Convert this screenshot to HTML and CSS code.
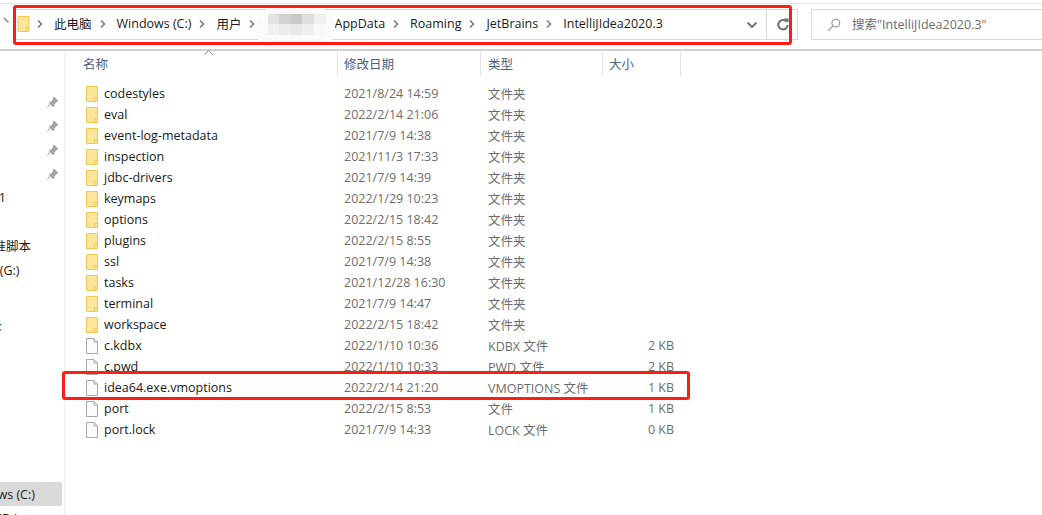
FILE: index.html
```html
<!DOCTYPE html>
<html lang="zh-CN">
<head>
  <meta charset="UTF-8" />
  <title>IntelliJIdea2020.3</title>
  <link rel="stylesheet" href="styles.css">
</head>
<body>
<svg class="defs" width="0" height="0">
  <symbol id="folder" viewBox="0 0 12 16">
    <path d="M.5.5h11v15H.5z" fill="#fde59c" stroke="#f0c750"/>
    <path d="M8.5 15.5v-4h3" fill="none" stroke="#f0c750"/>
  </symbol>
  <symbol id="file" viewBox="0 0 12 16">
    <path d="M.5.5h7.5l3.500 3.500v11.500H.5z" fill="#fbfbfb" stroke="#a8a8a8"/>
    <path d="M8 .5v3.500h3.500" fill="none" stroke="#a8a8a8"/>
  </symbol>
  <symbol id="pin" viewBox="0 0 12 12">
    <path d="M7 .5l4.500 4.500-1.500.8-2.500 2.500-.3 2-1.200.6-4-4 .6-1.200 2-.3L6.200 2z" fill="#a3a3a3"/>
    <path d="M3 8L.5 11.500" stroke="#a3a3a3" fill="none"/>
  </symbol>
  <symbol id="chev" viewBox="0 0 6 10">
    <path d="M1 1.500L4.500 5 1 8.500" fill="none" stroke="#7a7a7a" stroke-width="1.600"/>
  </symbol>
</svg>

<header class="toolbar">
  <svg class="up-arrow" width="6" height="10" viewBox="0 0 6 10"><path d="M0 1l4.500 4.500" stroke="#8a8a8a" stroke-width="1.500" fill="none"/></svg>
  <div class="addr">
    <svg class="addr-folder" width="13" height="16"><use href="#folder"/></svg>
    <svg class="chev first" width="6" height="10"><use href="#chev"/></svg>
    <span>此电脑</span>
    <svg class="chev" width="6" height="10"><use href="#chev"/></svg>
    <span>Windows (C:)</span>
    <svg class="chev" width="6" height="10"><use href="#chev"/></svg>
    <span>用户</span>
    <svg class="chev" width="6" height="10"><use href="#chev"/></svg>
    <span class="hidden-name"></span>
    <span>AppData</span>
    <svg class="chev" width="6" height="10"><use href="#chev"/></svg>
    <span>Roaming</span>
    <svg class="chev" width="6" height="10"><use href="#chev"/></svg>
    <span>JetBrains</span>
    <svg class="chev" width="6" height="10"><use href="#chev"/></svg>
    <span>IntelliJIdea2020.3</span>
    <div class="addr-refresh">
      <svg class="addr-down" width="12" height="8" viewBox="0 0 12 8"><path d="M1.500 1.500L6 6l4.500-4.500" fill="none" stroke="#777" stroke-width="2"/></svg>
      <div class="refresh-btn">
        <svg width="12" height="13" viewBox="0 0 12 13"><path d="M9.500 3.500A4.700 4.700 0 1 0 10.700 7" fill="none" stroke="#6f6f6f" stroke-width="2"/><path d="M6.500 .5h5v4.500z" fill="#6f6f6f"/></svg>
      </div>
    </div>
  </div>
  <div class="search">
    <svg width="14" height="14" viewBox="0 0 14 14"><circle cx="8.800" cy="5" r="4" fill="none" stroke="#8a8a8a"/><path d="M5.800 8L1 13" stroke="#b59a9a" stroke-width="1.200"/></svg>
    <span>搜索"IntelliJIdea2020.3"</span>
  </div>
</header>

<div class="main">
  <aside class="side">
    <div class="side-row pinned"><svg width="12" height="12"><use href="#pin"/></svg></div>
    <div class="side-row pinned"><svg width="12" height="12"><use href="#pin"/></svg></div>
    <div class="side-row pinned"><svg width="12" height="12"><use href="#pin"/></svg></div>
    <div class="side-row pinned"><svg width="12" height="12"><use href="#pin"/></svg></div>
    <div class="side-row"><span class="cut cut-one">Project1</span></div>
    <div class="side-row"></div>
    <div class="side-row"><span class="cut cut-script">油猴标准脚本</span></div>
    <div class="side-row"><span class="cut cut-drive">新加卷 (G:)</span></div>
    <div class="side-row gap"><span class="cut cut-last">下载目录</span></div>
    <div class="side-row selected"><span class="cut cut-win">Windows (C:)</span></div>
    <div class="side-row"><span class="cut cut-d">本地磁盘 (D:)</span></div>
  </aside>

  <section class="list">
    <div class="row head">
      <span class="name-head">名称</span>
      <span>修改日期</span>
      <span>类型</span>
      <span>大小</span>
      <svg class="sort" width="9" height="5" viewBox="0 0 9 5"><path d="M.5 4.500l4-4 4 4" fill="none" stroke="#8a8a8a"/></svg>
    </div>
    <div class="rows">
      <div class="row"><span class="name"><svg width="12" height="16"><use href="#folder"/></svg>codestyles</span><span>2021/8/24 14:59</span><span>文件夹</span><span></span></div>
      <div class="row"><span class="name"><svg width="12" height="16"><use href="#folder"/></svg>eval</span><span>2022/2/14 21:06</span><span>文件夹</span><span></span></div>
      <div class="row"><span class="name"><svg width="12" height="16"><use href="#folder"/></svg>event-log-metadata</span><span>2021/7/9 14:38</span><span>文件夹</span><span></span></div>
      <div class="row"><span class="name"><svg width="12" height="16"><use href="#folder"/></svg>inspection</span><span>2021/11/3 17:33</span><span>文件夹</span><span></span></div>
      <div class="row"><span class="name"><svg width="12" height="16"><use href="#folder"/></svg>jdbc-drivers</span><span>2021/7/9 14:39</span><span>文件夹</span><span></span></div>
      <div class="row"><span class="name"><svg width="12" height="16"><use href="#folder"/></svg>keymaps</span><span>2022/1/29 10:23</span><span>文件夹</span><span></span></div>
      <div class="row"><span class="name"><svg width="12" height="16"><use href="#folder"/></svg>options</span><span>2022/2/15 18:42</span><span>文件夹</span><span></span></div>
      <div class="row"><span class="name"><svg width="12" height="16"><use href="#folder"/></svg>plugins</span><span>2022/2/15 8:55</span><span>文件夹</span><span></span></div>
      <div class="row"><span class="name"><svg width="12" height="16"><use href="#folder"/></svg>ssl</span><span>2021/7/9 14:38</span><span>文件夹</span><span></span></div>
      <div class="row"><span class="name"><svg width="12" height="16"><use href="#folder"/></svg>tasks</span><span>2021/12/28 16:30</span><span>文件夹</span><span></span></div>
      <div class="row"><span class="name"><svg width="12" height="16"><use href="#folder"/></svg>terminal</span><span>2021/7/9 14:47</span><span>文件夹</span><span></span></div>
      <div class="row"><span class="name"><svg width="12" height="16"><use href="#folder"/></svg>workspace</span><span>2022/2/15 18:42</span><span>文件夹</span><span></span></div>
      <div class="row"><span class="name"><svg width="12" height="16"><use href="#file"/></svg>c.kdbx</span><span>2022/1/10 10:36</span><span>KDBX 文件</span><span class="size">2 KB</span></div>
      <div class="row"><span class="name"><svg width="12" height="16"><use href="#file"/></svg>c.pwd</span><span>2022/1/10 10:33</span><span>PWD 文件</span><span class="size">2 KB</span></div>
      <div class="row"><span class="name"><svg width="12" height="16"><use href="#file"/></svg>idea64.exe.vmoptions</span><span>2022/2/14 21:20</span><span>VMOPTIONS 文件</span><span class="size">1 KB</span></div>
      <div class="row"><span class="name"><svg width="12" height="16"><use href="#file"/></svg>port</span><span>2022/2/15 8:53</span><span>文件</span><span class="size">1 KB</span></div>
      <div class="row"><span class="name"><svg width="12" height="16"><use href="#file"/></svg>port.lock</span><span>2021/7/9 14:33</span><span>LOCK 文件</span><span class="size">0 KB</span></div>
    </div>
  </section>
</div>

<!-- 打码和红框都是盖在截图上的 -->
<svg class="mosaic" width="80" height="40" viewBox="0 0 80 40">
  <rect width="80" height="40" rx="18" fill="#fafafa"/>
  <rect x="13" y="6" width="11" height="10" fill="#e2e2e2"/>
  <rect x="24" y="6" width="12" height="10" fill="#d2d2d2"/>
  <rect x="36" y="6" width="11" height="10" fill="#c9c9c9"/>
  <rect x="47" y="6" width="12" height="10" fill="#dedede"/>
  <rect x="59" y="6" width="12" height="10" fill="#efefef"/>
  <rect x="13" y="16" width="11" height="11" fill="#f0f0f0"/>
  <rect x="24" y="16" width="12" height="11" fill="#ececec"/>
  <rect x="36" y="16" width="11" height="11" fill="#e8e8e8"/>
  <rect x="47" y="16" width="12" height="11" fill="#efefef"/>
  <rect x="59" y="16" width="12" height="11" fill="#f8f8f8"/>
</svg>
<div class="mark mark-addr"></div>
<div class="mark mark-row"></div>
</body>
</html>
```

FILE: styles.css
```css
* {
  box-sizing: border-box;
}

html, body {
  margin: 0;
  height: 100%;
}

body {
  position: relative;
  width: 1042px;
  height: 515px;
  overflow: hidden;
  background: #fff;
  color: #1a1a1a;
  font-family: "Open Sans", "Noto Sans CJK SC", sans-serif;
  font-size: 12.5px;
}

.defs {
  position: absolute;
}

.toolbar {
  display: flex;
  height: 51px;
  padding-top: 8px;
  border-top: 1px solid transparent;
  border-bottom: 2px solid #cfcfcf;
  background: linear-gradient(#fff 2px, #e6e6e6 2px, #e6e6e6 3px, #fff 3px);
}

.up-arrow {
  flex: none;
  width: 14px;
  margin-top: 8px;
}

.addr {
  display: flex;
  align-items: center;
  width: 784px;
  height: 31px;
  padding-left: 3px;
  border: 1px solid #d9d9d9;
  border-left: 0;
}

.addr > span,
.search > span {
  margin-bottom: 2px;
}

.addr-folder {
  margin: 0 7px 1px 0;
}

.chev {
  margin: 0 11px 2px 8px;
}

.chev.first {
  margin-left: 0;
}

.hidden-name {
  width: 68px;
}

.addr-refresh {
  display: flex;
  align-items: center;
  gap: 8px;
  height: 100%;
  margin-left: auto;
}

.refresh-btn {
  display: flex;
  align-items: center;
  width: 31px;
  height: 100%;
  padding-left: 10px;
  border-left: 1px solid #d9d9d9;
}

.search {
  display: flex;
  align-items: center;
  gap: 11px;
  flex: 1;
  height: 31px;
  margin-left: 13px;
  padding-left: 15px;
  border: 1px solid #d9d9d9;
  border-right: 0;
  color: #6d6d6d;
}

.main {
  display: flex;
  height: 464px;
}

.side {
  flex: none;
  width: 65px;
  padding-top: 39px;
  border-right: 1px solid #efefef;
  overflow: hidden;
}

.side-row {
  display: flex;
  align-items: center;
  height: 24px;
  width: 62px;
  padding-bottom: 2px;
  white-space: nowrap;
  overflow: hidden;
}

.side-row.pinned {
  justify-content: flex-end;
  padding: 0 3px 0 0;
}

.side-row.gap {
  margin: 31px 0 145px;
}

.side-row.selected {
  padding-bottom: 0;
  background: #d9d9d9;
}

.cut {
  flex: none;
}

.cut-one {
  margin-left: -42px;
}

.cut-script {
  margin-left: -44px;
}

.cut-drive {
  margin-left: -41px;
}

.cut-last {
  margin-left: -48px;
}

.cut-win {
  margin-left: -40px;
}

.cut-d {
  margin-left: -55px;
}

.list {
  flex: 1;
}

.row {
  display: grid;
  grid-template-columns: 273px 143px 122px 78px;
  align-items: center;
  height: 21px;
  color: #6d6d6d;
  white-space: nowrap;
}

.row > span {
  padding-left: 6px;
}

.row > span:nth-child(3) {
  padding-left: 7px;
}

.row .name {
  display: flex;
  align-items: center;
  gap: 6px;
  padding-left: 21px;
  color: #1a1a1a;
}

.row .size {
  padding: 0 7px 0 0;
  text-align: right;
}

.row.head {
  position: relative;
  height: 24px;
  margin-top: 1px;
  color: #4c607a;
}

.row.head > span {
  display: flex;
  align-items: center;
  height: 100%;
  padding-bottom: 1px;
  border-right: 1px solid #e3e3e3;
}

.row.head .name-head {
  padding-left: 18px;
}

.sort {
  position: absolute;
  left: 139px;
  top: -2px;
}

.rows {
  padding-top: 7px;
}

.mosaic {
  position: absolute;
  left: 255px;
  top: 8px;
}

.mark {
  position: absolute;
  border: 3px solid #fd1d12;
  border-radius: 3px;
}

.mark-addr {
  left: 13px;
  top: 5px;
  width: 779px;
  height: 40px;
}

.mark-row {
  left: 62px;
  top: 371px;
  width: 628px;
  height: 29px;
}
```
